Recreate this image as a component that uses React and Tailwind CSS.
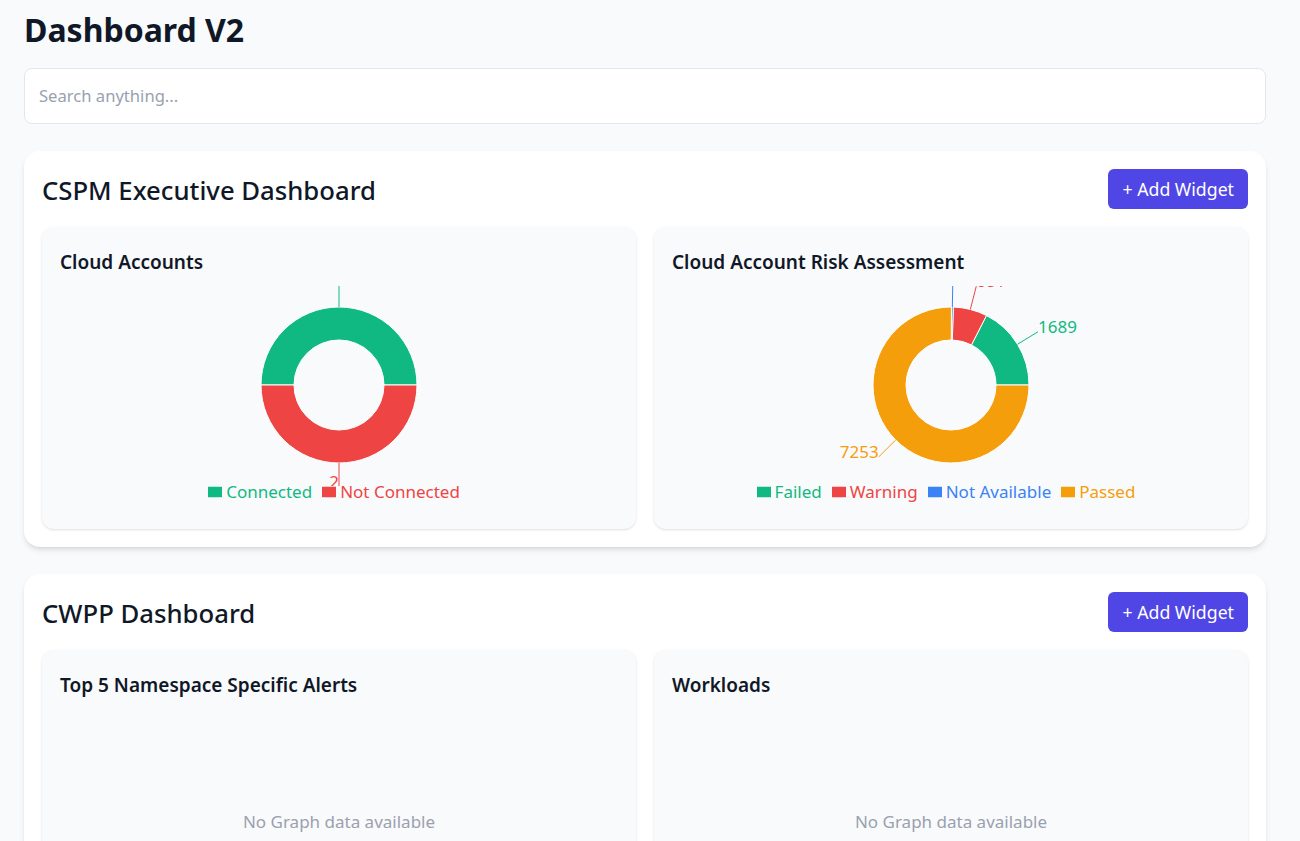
import React from 'react';

const FONT = { fontFamily: '"Noto Sans", "Open Sans", sans-serif' };

const rad = (a) => (a * Math.PI) / 180;
const polar = (cx, cy, r, a) => [cx + r * Math.cos(rad(a)), cy - r * Math.sin(rad(a))];

function sectorPath(cx, cy, r, R, a0, a1) {
  const [x0, y0] = polar(cx, cy, R, a0);
  const [x1, y1] = polar(cx, cy, R, a1);
  const [x2, y2] = polar(cx, cy, r, a1);
  const [x3, y3] = polar(cx, cy, r, a0);
  const large = a1 - a0 > 180 ? 1 : 0;
  return `M${x0},${y0} A${R},${R} 0 ${large} 0 ${x1},${y1} L${x2},${y2} A${r},${r} 0 ${large} 1 ${x3},${y3} Z`;
}

function Donut({ data }) {
  const cx = 297;
  const cy = 99;
  const R = 78;
  const r = 45;
  const total = data.reduce((s, d) => s + d.value, 0);
  let angle = 0;
  const slices = data.map((d) => {
    const a0 = angle;
    const a1 = angle + (d.value / total) * 360;
    angle = a1;
    return { ...d, a0, a1, mid: (a0 + a1) / 2 };
  });

  return (
    <svg width="594" height="200" className="block overflow-hidden">
      {slices.map((s) => (
        <path key={s.name} d={sectorPath(cx, cy, r, R, s.a0, s.a1)} fill={s.color} stroke="#fff" strokeWidth="1" />
      ))}
      {slices.map((s) => {
        const [lx0, ly0] = polar(cx, cy, R, s.mid);
        const [lx1, ly1] = polar(cx, cy, R + 24, s.mid);
        const anchor = lx1 > cx + 0.5 ? 'start' : 'end';
        return (
          <g key={s.name + '-label'}>
            <path d={`M${lx0},${ly0} L${lx1},${ly1}`} stroke={s.color} fill="none" />
            <text x={lx1} y={ly1 + 1} fill={s.color} textAnchor={anchor} fontSize="17" style={FONT}>
              {s.value}
            </text>
          </g>
        );
      })}
    </svg>
  );
}

function Legend({ data }) {
  return (
    <div className="flex justify-center items-center h-4 -mt-0.5 text-[17px]">
      {data.map((d) => (
        <div key={d.name} className="flex items-center mr-[10px]">
          <svg width="14" height="14" viewBox="0 0 32 32" className="mr-1">
            <path d="M0,4h32v24h-32z" fill={d.color} />
          </svg>
          <span style={{ color: d.color }} className="leading-4">{d.name}</span>
        </div>
      ))}
    </div>
  );
}

function ChartWidget({ title, data }) {
  return (
    <div className="bg-gray-50 rounded-xl shadow-sm h-[302px] pt-[21px]">
      <h3 className="px-[18px] text-[19px] leading-7 font-semibold text-gray-900">{title}</h3>
      <div className="mt-[10px]">
        <Donut data={data} />
        <Legend data={data} />
      </div>
    </div>
  );
}

function EmptyWidget({ title }) {
  return (
    <div className="bg-gray-50 rounded-xl shadow-sm h-[302px] pt-[21px]">
      <h3 className="px-[18px] text-[19px] leading-7 font-semibold text-gray-900">{title}</h3>
      <div className="mt-[10px] h-[226px] flex items-center justify-center text-[17px] text-gray-400">
        No Graph data available
      </div>
    </div>
  );
}

function Section({ title, children }) {
  return (
    <section className="bg-white rounded-2xl shadow-md p-[18px]">
      <div className="flex items-center justify-between mb-[18px]">
        <h2 className="pt-1 text-[25.7px] leading-8 font-medium text-gray-900">{title}</h2>
        <button className="h-10 px-[14px] rounded-md bg-[#4f46e5] text-white text-[17.7px]">+ Add Widget</button>
      </div>
      <div className="grid grid-cols-2 gap-[18px]">{children}</div>
    </section>
  );
}

const cloudAccounts = [
  { name: 'Connected', value: 2, color: '#10b981' },
  { name: 'Not Connected', value: 2, color: '#ef4444' },
];

const riskAssessment = [
  { name: 'Failed', value: 1689, color: '#10b981' },
  { name: 'Warning', value: 681, color: '#ef4444' },
  { name: 'Not Available', value: 36, color: '#3b82f6' },
  { name: 'Passed', value: 7253, color: '#f59e0b' },
];

export default function App() {
  return (
    <div style={FONT} className="h-screen overflow-hidden bg-gray-50 pl-6 pr-[34px] pt-3">
      <h1 className="text-[32px] leading-9 font-bold text-gray-900 mb-5">Dashboard V2</h1>
      <input
        type="text"
        placeholder="Search anything..."
        className="w-full h-14 pb-0.5 px-[14px] bg-white border border-gray-200 rounded-lg text-[16.6px] placeholder-gray-400 outline-none mb-[27px]"
      />
      <div className="flex flex-col gap-[27px]">
        <Section title="CSPM Executive Dashboard">
          <ChartWidget title="Cloud Accounts" data={cloudAccounts} />
          <ChartWidget title="Cloud Account Risk Assessment" data={riskAssessment} />
        </Section>
        <Section title="CWPP Dashboard">
          <EmptyWidget title="Top 5 Namespace Specific Alerts" />
          <EmptyWidget title="Workloads" />
        </Section>
      </div>
    </div>
  );
}
